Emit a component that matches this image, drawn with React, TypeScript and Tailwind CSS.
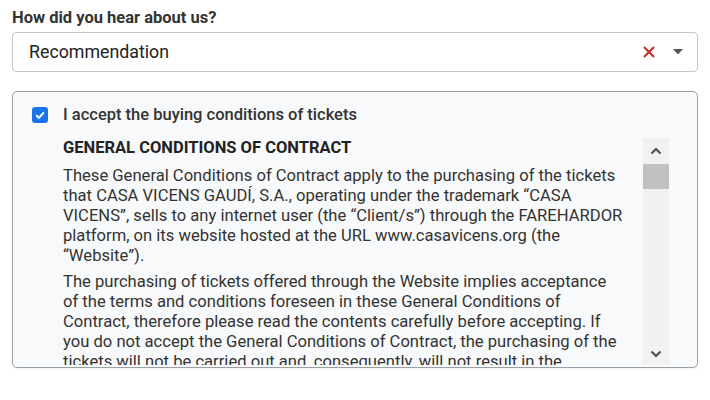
import React from 'react'

const Scrollbar = () => (
  <div className="w-[26px] shrink-0 bg-[#f1f1f1] flex flex-col items-center">
    <div className="h-[26px] flex items-center justify-center">
      <svg width="12" height="8" viewBox="0 0 12 8">
        <path d="M1.5 6.5 L6 2 L10.5 6.5" fill="none" stroke="#505050" strokeWidth="2.2" />
      </svg>
    </div>
    <div className="w-full h-[25px] bg-[#c1c1c1]" />
    <div className="flex-1" />
    <div className="h-[22px] flex items-center justify-center">
      <svg width="12" height="8" viewBox="0 0 12 8">
        <path d="M1.5 1.5 L6 6 L10.5 1.5" fill="none" stroke="#505050" strokeWidth="2.2" />
      </svg>
    </div>
  </div>
)

export default function App() {
  return (
    <div className="w-[710px] h-[400px] bg-white px-3 pt-[8px] font-['Roboto',sans-serif] text-[#212529]">
      <label className="block text-[16.5px] font-bold text-[#333] leading-[20px] mb-[4px]">
        How did you hear about us?
      </label>
      <div className="h-[40px] w-[686px] border border-[#c7c7c7] rounded-[4px] flex items-center pl-[16px] pr-[12px]">
        <span className="flex-1 text-[17.8px] text-[#222]">Recommendation</span>
        <svg width="14" height="14" viewBox="0 0 14 14" className="mr-[17px]">
          <path d="M2 2 L12 12 M12 2 L2 12" stroke="#c62828" strokeWidth="2" />
        </svg>
        <svg width="10" height="6" viewBox="0 0 10 6" className="mr-[2px]">
          <path d="M0 0 L10 0 L5 5.5 Z" fill="#555" />
        </svg>
      </div>

      <div className="mt-[19px] w-[686px] h-[277px] border border-[#9aa0a6] rounded-[5px] bg-[#f8f9fa] shadow-[0_2px_3px_rgba(0,0,0,0.04)] pl-[19px] pr-[28px] pt-[14px]">
        <div className="flex items-center gap-[15px] h-[18px]">
          <span className="w-[16px] h-[16px] rounded-[3px] bg-[#1a73e8] flex items-center justify-center">
            <svg width="12" height="12" viewBox="0 0 12 12">
              <path d="M2.2 6.2 L4.9 8.9 L9.9 3.3" fill="none" stroke="#fff" strokeWidth="2" />
            </svg>
          </span>
          <span className="text-[16.5px] font-medium text-[#333]">
            I accept the buying conditions of tickets
          </span>
        </div>
        <div className="flex mt-[14px] ml-[31px] h-[227px]">
          <div className="flex-1 overflow-hidden pr-[4px] text-[16.6px] leading-[20px] text-[#333] whitespace-nowrap">
            <h3 className="font-bold text-[16.5px] leading-[20px] mb-[8px] text-[#222]">
              GENERAL CONDITIONS OF CONTRACT
            </h3>
            <p className="mb-[6px]">
              These General Conditions of Contract apply to the purchasing of the tickets<br />
              that CASA VICENS GAUDÍ, S.A., operating under the trademark “CASA<br />
              VICENS”, sells to any internet user (the “Client/s”) through the FAREHARDOR<br />
              platform, on its website hosted at the URL www.casavicens.org (the<br />
              “Website”).
            </p>
            <p>
              The purchasing of tickets offered through the Website implies acceptance<br />
              of the terms and conditions foreseen in these General Conditions of<br />
              Contract, therefore please read the contents carefully before accepting. If<br />
              you do not accept the General Conditions of Contract, the purchasing of the<br />
              tickets will not be carried out and, consequently, will not result in the
            </p>
          </div>
          <Scrollbar />
        </div>
      </div>
    </div>
  )
}
